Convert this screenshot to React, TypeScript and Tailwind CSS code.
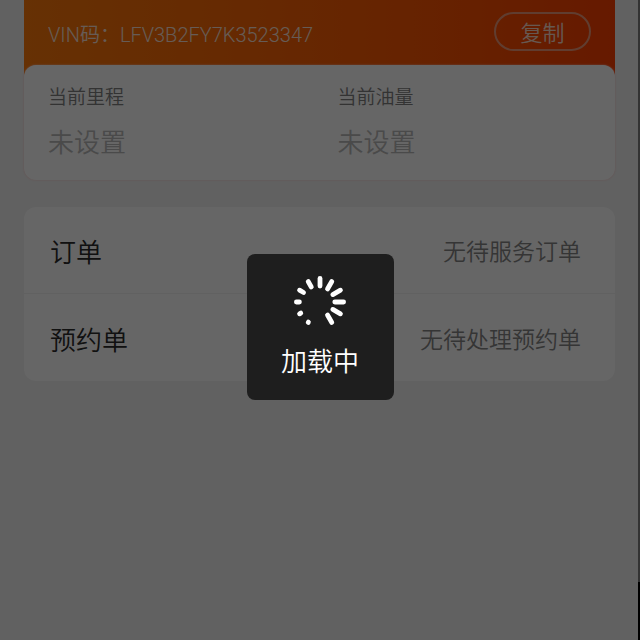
const metrics = [
  { label: "当前里程", value: "未设置" },
  { label: "当前油量", value: "未设置" }
];

const entries = [
  { title: "订单", note: "无待服务订单" },
  { title: "预约单", note: "无待处理预约单" }
];

// clockwise from the shortest spoke, the gap sits at 180deg
const spokes = [
  { angle: 210, length: 0.4 },
  { angle: 240, length: 1.4 },
  { angle: 270, length: 3 },
  { angle: 300, length: 4.6 },
  { angle: 330, length: 6.2 },
  { angle: 0, length: 7.6 },
  { angle: 30, length: 8.6 },
  { angle: 60, length: 8.8 },
  { angle: 90, length: 8.8 },
  { angle: 120, length: 8.8 },
  { angle: 150, length: 8.6 }
];

export default function App() {
  return (
    <div className="flex min-h-screen bg-[#f2f2f2] font-['Roboto','Noto_Sans_CJK_SC',sans-serif] font-[350]">
      <main className="min-w-0 flex-1 pr-[23px] pl-6">
        <header className="-mb-3 flex h-[77px] items-start justify-between bg-linear-to-r from-[#ff7a0a] to-[#ff4000] px-6 pt-3">
          <p className="text-[20px] leading-[46px] text-[#ffe4d6]">VIN码：LFV3B2FY7K3523347</p>
          <button
            type="button"
            className="h-[39px] w-[97px] rounded-full border-2 border-[#f09a78] pt-1 text-[22px] leading-8 text-[#ffdccb]"
          >
            复制
          </button>
        </header>

        <section className="relative grid grid-cols-2 gap-9 rounded-xl bg-white px-6 pt-[17px] pb-[19px] shadow-[0_0_2px_#ffc8c8]">
          {metrics.map((item) => (
            <div key={item.label}>
              <p className="text-[19px] leading-8 text-[#808080]">{item.label}</p>
              <p className="mt-[11px] text-[26px] leading-9 text-[#b8b8b8]">{item.value}</p>
            </div>
          ))}
        </section>

        <section className="mt-[27px] divide-y divide-[#f2f2f2] rounded-xl bg-white">
          {entries.map((entry) => (
            <div key={entry.title} className="flex h-[87px] items-center justify-between pt-1.5 pr-[34px] pl-[26px]">
              <h2 className="text-[26px] leading-9 text-[#2b2b2b]">{entry.title}</h2>
              <p className="text-[23px] leading-9 text-[#858585]">{entry.note}</p>
            </div>
          ))}
        </section>
      </main>

      <ScrollEdge />
      <LoadingToast text="加载中" />
    </div>
  );
}

function ScrollEdge() {
  return (
    <div className="flex w-0.5 flex-col bg-black">
      <div className="h-[91%] bg-[#808080]" />
    </div>
  );
}

function LoadingToast({ text }: { text: string }) {
  return (
    <div className="fixed inset-0 flex items-center justify-center bg-black/60 pt-3.5">
      <div role="status" className="flex h-[146px] w-[147px] flex-col items-center rounded-lg bg-[#1e1e1e] pt-5">
        <svg className="size-14" viewBox="-28 -28 56 56" aria-hidden="true">
          {spokes.map((spoke) => (
            <line
              key={spoke.angle}
              x1="0"
              y1="-23.6"
              x2="0"
              y2={-23.6 + spoke.length}
              stroke="white"
              strokeWidth="4.8"
              strokeLinecap="round"
              transform={`rotate(${spoke.angle})`}
            />
          ))}
        </svg>
        <p className="mt-3.5 text-[26px] leading-9 text-white">{text}</p>
      </div>
    </div>
  );
}
